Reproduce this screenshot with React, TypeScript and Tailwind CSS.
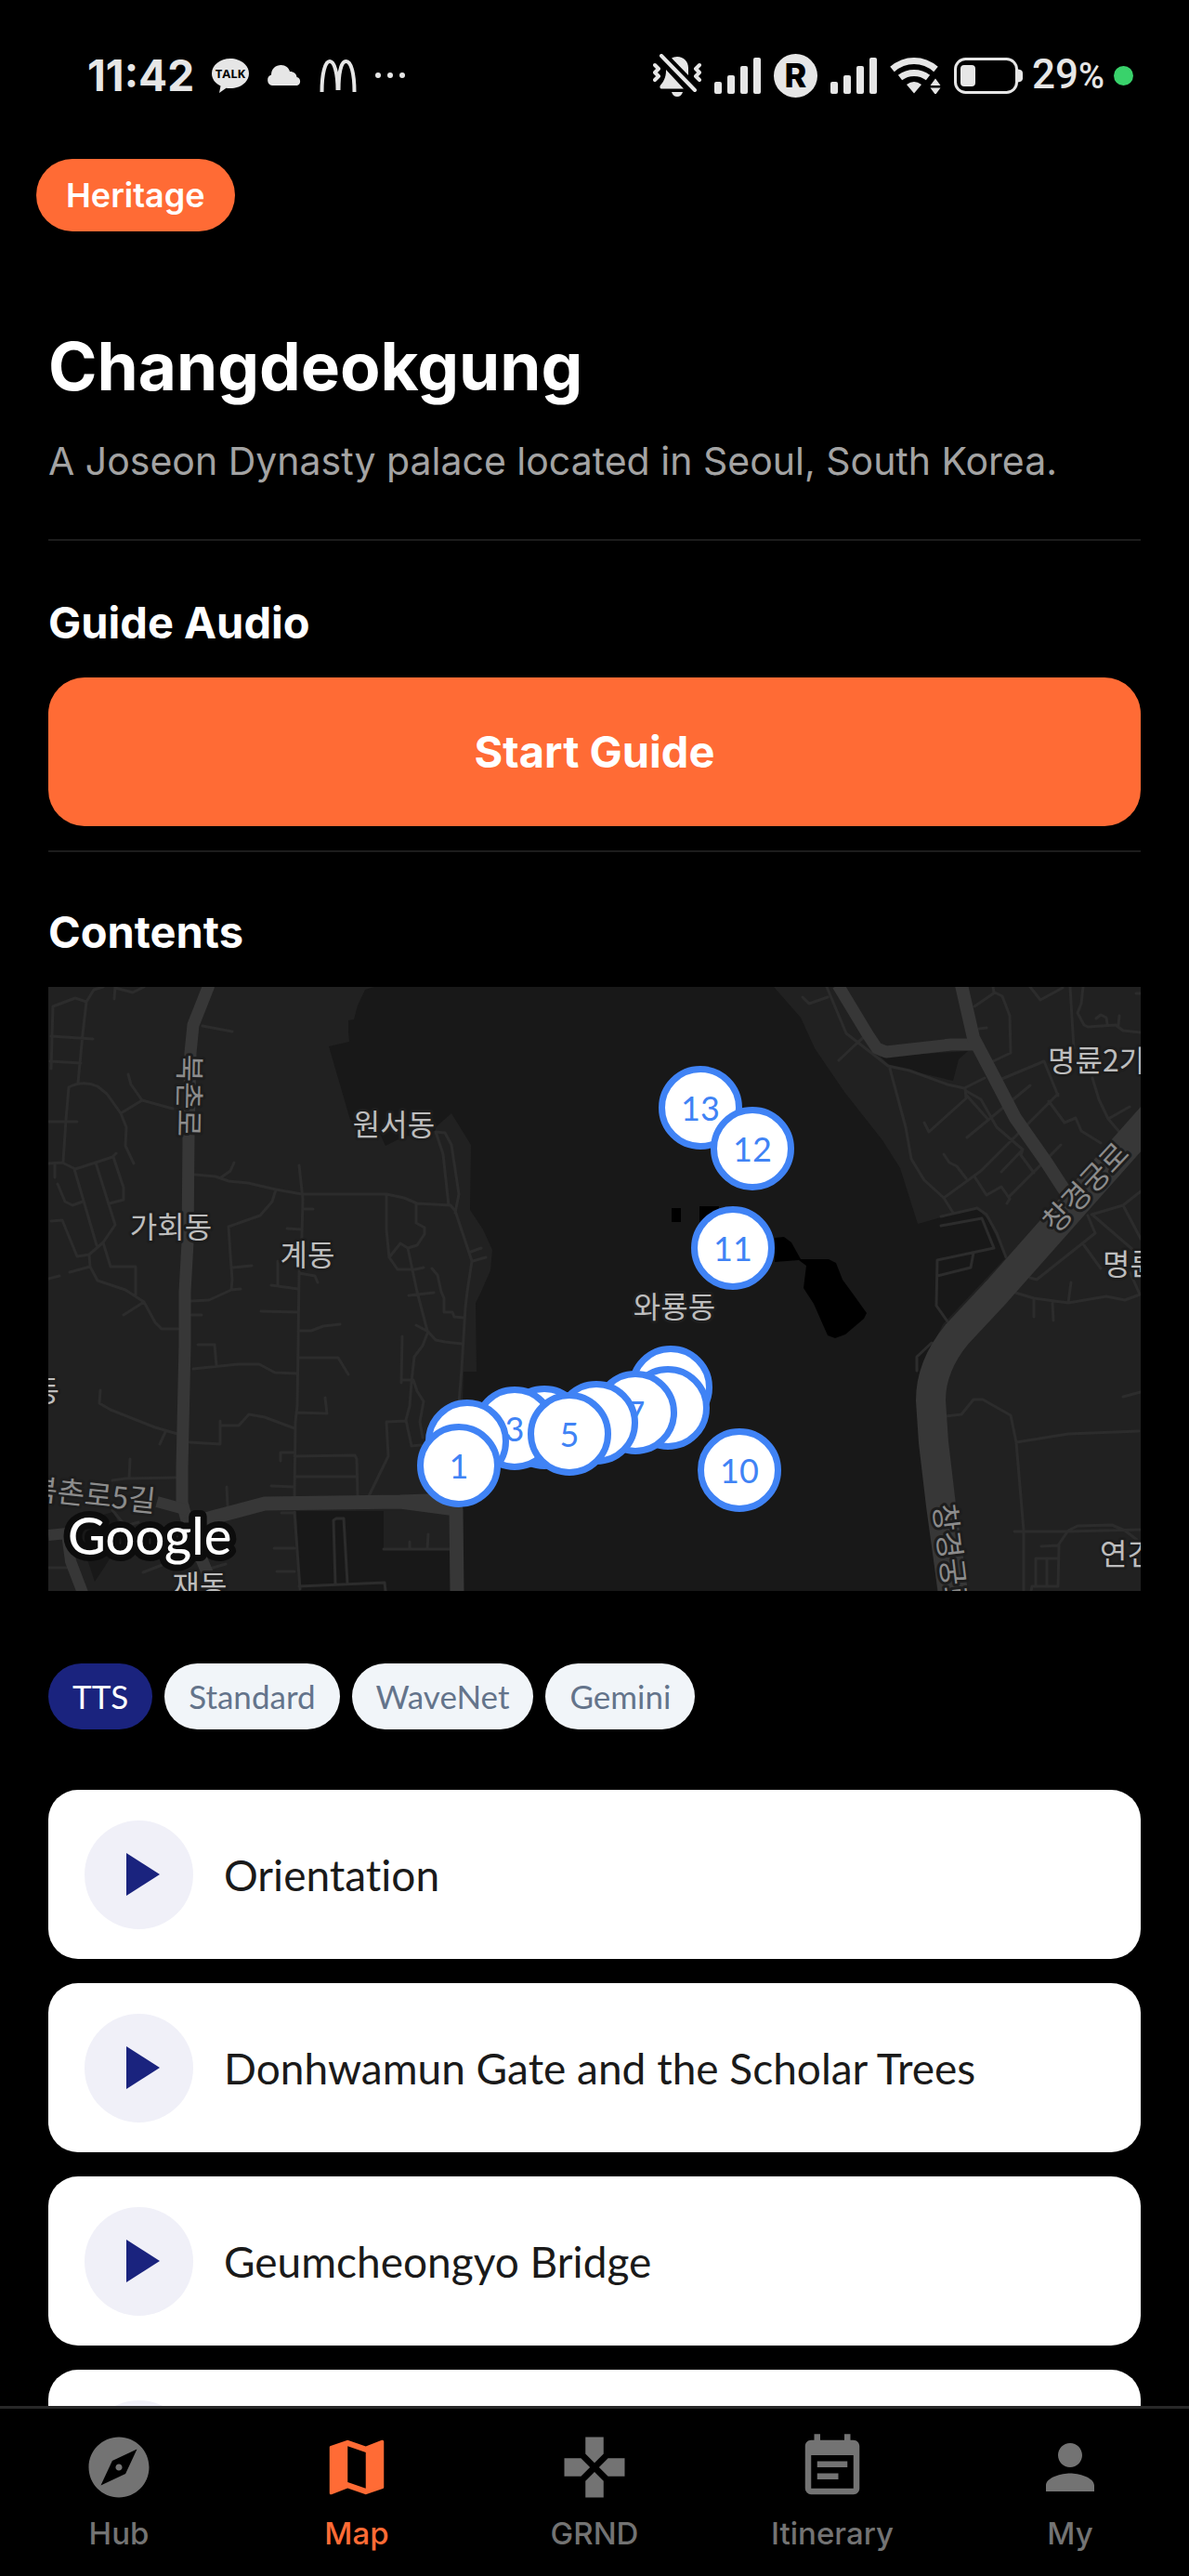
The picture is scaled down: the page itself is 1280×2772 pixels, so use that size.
import { useState } from "react";
import type { IconType } from "react-icons";
import { MdEventNote, MdExplore, MdGamepad, MdMap, MdPerson } from "react-icons/md";

interface Stop {
  id: number;
  x: number;
  y: number;
}

const MAP_W = 1176;
const MAP_H = 650;

// sorted north to south, so that southern pins overlap northern ones
const stops: Stop[] = [
  { id: 13, x: 702, y: 130 },
  { id: 12, x: 758, y: 174 },
  { id: 11, x: 737, y: 281 },
  { id: 9, x: 670, y: 431 },
  { id: 8, x: 667, y: 453 },
  { id: 7, x: 632, y: 458 },
  { id: 6, x: 590, y: 469 },
  { id: 4, x: 534, y: 474 },
  { id: 3, x: 502, y: 475 },
  { id: 5, x: 561, y: 481 },
  { id: 2, x: 451, y: 489 },
  { id: 1, x: 442, y: 515 },
  { id: 10, x: 744, y: 520 },
];

const voices = ["TTS", "Standard", "WaveNet", "Gemini"];

const tracks = ["Orientation", "Donhwamun Gate and the Scholar Trees", "Geumcheongyo Bridge", ""];

const navItems: { label: string; icon: IconType }[] = [
  { label: "Hub", icon: MdExplore },
  { label: "Map", icon: MdMap },
  { label: "GRND", icon: MdGamepad },
  { label: "Itinerary", icon: MdEventNote },
  { label: "My", icon: MdPerson },
];

const alleys = [
  "M3 88 5 21 29 12 41 16 49 3 59 0M72 0 71 13M72 1 91 6 103 0M41 16 37 51 32 103M3 53 48 56M2 80 35 82",
  "M16 188 19 143 22 108Q37 100 53 107L63 115 78 136 84 151 83 171 92 190M78 136 101 122 134 131M101 122 89 105 86 94M0 145H31",
  "M0 190 15 189 29 196 51 189 69 183 73 179M28 196 52 278M51 189 72 256 59 275 44 288 31 290 15 251 3 252",
  "M70 183 81 216V229L66 233M10 212 18 231 26 235 37 231M7 191V205M59 275 67 301H94V333",
  "M44 288 45 301 53 316 83 326 103 339 115 361 122 368H140M103 339 81 353M0 314 12 311M23 307 45 301M166 42 198 48",
  "M158 202 180 204 194 209 215 211 245 218 273 223H364L383 227 397 233 433 235 438 241 456 295 451 328 449 345 445 411 442 448",
  "M186 205 196 198 200 189M270 192 274 228 273 268 270 308 269 385 268 451 266 468 265 548",
  "M245 218 241 231 228 246 194 258 196 288 198 315 197 326M154 338 173 337 197 326 207 325M274 239H285M257 260 273 261",
  "M417 156 427 157 434 170 442 223 438 243M417 156 425 180 431 235M364 223V261L367 291 376 304H395L404 302",
  "M396 233V254L405 259V266L397 278 387 281 379 276 367 291M387 281 397 328 408 370 417 380 427 382 445 384",
  "M413 303 419 310 423 328 426 335V350H435L437 355 447 356M455 285 466 281M457 295 471 291",
  "M198 302 219 300M247 295V322M240 321 269 325M270 308 287 311 290 318M154 353H165M229 349 269 350M269 370H283L296 365 314 363",
  "M161 385H179L181 408M156 411 205 406H227L244 415 267 416M269 399H312L323 417M388 332 415 329M396 364 409 371",
  "M408 373 403 386 394 398 391 425 389 451 385 466 391 494 401 493M381 376 380 426M380 423H393L397 435 404 446 400 468 403 485",
  "M56 434 55 448 67 455 115 474 139 481M126 479 120 492M152 490 185 492V467M186 472H205L216 460 233 463 265 475M267 458 300 459 298 442",
  "M265 505 330 504 332 508 333 548M265 527H332M250 510V501H265M240 537 265 538M385 467 364 468 366 505 345 548",
  "M69 531 83 529 138 528M88 508 87 529M192 538 193 558M265 565 271 648M251 566H265M243 604H265M246 629H265",
  "M309 642 307 574 310 572H318L322 642M270 645 362 641 363 650M361 605H433M389 597V605M409 589 408 605",
  "M102 630 138 616M0 625H20M69 563 83 580 97 576M174 626 191 621",
  "M838 0 859 50 904 85 927 90 968 105 986 109 1008 98M1017 103 1072 80M812 11 819 18 839 11M851 79 870 61 878 54",
  "M906 88 923 151 929 185 943 208 964 227 974 243M943 146 948 156 988 120 987 109",
  "M988 112 1004 121 1021 151 1049 175M988 116 1012 143M989 162 1057 106M1072 80 1087 117M1087 115 1020 182 1004 198 964 227",
  "M1077 123 1094 146 1106 141 1112 155 1133 168M997 21 1019 6 1027 10 1035 31 1036 71 1015 81M1017 0 1018 6M1002 45 1010 44",
  "M1057 0 1068 14 1092 1M1100 0 1104 66M1114 0 1112 18 1108 28 1115 41 1119 43 1149 41 1157 47 1176 49M1153 31 1152 41",
  "M1128 34 1133 30 1139 33 1140 40M1171 7H1176M1124 98 1131 121 1141 142 1164 129M1141 142 1153 156M964 180 970 189 978 193 988 206",
  "M997 204 1010 224 1026 215 1035 228 1032 233M1035 225 1090 170M1026 199 1049 175 1047 181 1061 200",
  "M961 247 1000 238 1010 245 1021 265 1031 291M961 257 1005 249 1018 281 957 294 956 343 968 360M996 286 993 302 957 311",
  "M1119 246 1127 265 1064 315 1057 313M1123 245 1157 235 1176 220M1157 235 1176 271M1125 246 1176 290M1115 278 1133 303",
  "M1101 318 1098 340M1041 329 1061 335 1098 340 1139 333 1159 337 1175 331 1165 308M1061 336V355M1081 340 1082 359M1157 441 1176 436",
  "M966 462 983 460 996 444H1006L1036 461 1042 490 1050 585V650M1042 490 1098 481 1174 478M1040 586H1098L1176 584",
  "M1069 602 1087 601 1098 585 1108 580 1145 579 1159 585 1172 595M1088 601 1087 645H1059L1058 650M1063 645V615H1088M1075 615V645M935 413V398L951 383",
].join("");

function MapCanvas() {
  return (
    <svg viewBox={`0 0 ${MAP_W} ${MAP_H}`} className="block w-full" role="img" aria-label="Map of Changdeokgung">
      <rect width={MAP_W} height={MAP_H} fill="#212121" />
      <g fill="#181818">
        <path d="M351 0 341 3 333 20 329 35 323 36V48L324 59 302 64 325 143 357 158 363 171 383 161 417 155V151L434 136 455 170 454 240 468 261 478 283 476 305 466 328 460 340 461 414H447L446 451V650H957L935 451 937 418 963 363 1031 291 1012 251 1000 238 961 248 936 255 917 195 898 165 857 113 825 66 810 33 781 0Z" />
        <path d="M896 75 990 69 980 78 974 101 906 85Z" />
        <path d="M267 564H361V605H433V650H271Z" />
        <path d="M34 575 70 565 82 590 60 625 50 640 40 610Z" />
      </g>
      <path
        d="M782 270 792 269 800 275 810 293H840L848 297 855 315 866 330 881 351 878 357 858 374 847 378 839 375 824 341 813 324 816 300 808 294 782 296ZM671 238H681V253H671ZM701 236H722V255H701Z"
        fill="#000"
      />
      <path d={alleys} fill="none" stroke="#2c2c2c" strokeWidth="3" strokeLinecap="round" strokeLinejoin="round" />
      <g fill="none" stroke="#373737" strokeLinejoin="round">
        <path strokeWidth="13" d="M173 -2 156 41 153 71 151 161 150 275 147 328V385L144 518V555L152 585 176 642" />
        <path strokeWidth="15" d="M146 580 180 570 233 556 379 554 439 562 440 652M379 554 440 552" />
        <path strokeWidth="12" d="M117 554 150 563M0 590 20 588 40 570M20 588 24 618 37 652" />
        <path strokeWidth="13" d="M850 -2 882 51 892 66 902 70 972 62H998" />
        <path strokeWidth="14" d="M983 -2 996 55 1015 91 1041 141 1074 188 1100 228" />
        <path strokeWidth="32" d="M1200 126 1021 328 978 374Q950 408 950 445L953 490 961 558 974 652" />
      </g>
      <g
        fontFamily='"Noto Sans CJK KR", sans-serif'
        fontSize="32"
        fill="#bdbdbd"
        stroke="#1d1d1d"
        strokeWidth="6"
        strokeLinejoin="round"
        paintOrder="stroke"
        dominantBaseline="central"
      >
        <text x="372" y="146" textAnchor="middle">원서동</text>
        <text x="132" y="256" textAnchor="middle">가회동</text>
        <text x="279" y="286" textAnchor="middle">계동</text>
        <text x="674" y="342" textAnchor="middle">와룡동</text>
        <text x="163" y="642" textAnchor="middle">재동</text>
        <text x="12" y="432" textAnchor="end">동</text>
        <text x="1076" y="77">명륜2가</text>
        <text x="1135" y="296">명륜</text>
        <text x="1132" y="608">연건</text>
        <g fill="#8c8c8c">
          <text transform="translate(154 117) rotate(91)" textAnchor="middle">북촌로</text>
          <text transform="translate(1115 214) rotate(-47)" textAnchor="middle">창경궁로</text>
          <text transform="translate(967 556) rotate(83)">창경궁로</text>
          <text transform="translate(-19 537) rotate(6)">북촌로5길</text>
        </g>
      </g>
      <text
        x="21"
        y="611"
        fontFamily="Lato, sans-serif"
        fontSize="56"
        fontWeight="500"
        fill="#fff"
        stroke="#0c0c0c"
        strokeWidth="14"
        strokeLinejoin="round"
        paintOrder="stroke"
      >
        Google
      </text>
    </svg>
  );
}

function SignalIcon() {
  return (
    <svg viewBox="0 0 50 40" className="h-10 w-[50px]" fill="#e6e6e6" aria-hidden="true">
      <rect x="0" y="27" width="8" height="13" rx="2" />
      <rect x="14" y="20" width="8" height="20" rx="2" />
      <rect x="28" y="10" width="8" height="30" rx="2" />
      <rect x="42" y="1" width="8" height="39" rx="2" />
    </svg>
  );
}

function StatusBar() {
  return (
    <div className="flex h-[162px] shrink-0 items-center justify-between pr-[60px] pl-[94px] text-[#e6e6e6]">
      <div className="flex items-center gap-[19px]">
        <span className="text-[46px] leading-[56px] font-bold">11:42</span>
        <svg viewBox="0 0 40 40" className="size-10" aria-hidden="true">
          <path
            d="M20 2C9 2 0 9 0 18c0 6 3.600 10.500 9.500 13.500L8 39l7.500-5.200q2 .3 4.500.3c11 0 20-7.100 20-16.100S31 2 20 2Z"
            fill="currentColor"
          />
          <text x="20" y="23" textAnchor="middle" fontFamily="'Open Sans', sans-serif" fontSize="13" fontWeight="700" fill="#000">
            TALK
          </text>
        </svg>
        <svg viewBox="0 0 38 24" className="h-6 w-[38px]" fill="currentColor" aria-hidden="true">
          <path d="M6 23a6 6 0 0 1-1-11.500C5 5 10 1 15.500 1c5 0 8.500 3 9.500 7 4.500 0 7 2.500 7.500 6A4.700 4.700 0 0 1 33 23Z" />
        </svg>
        <svg viewBox="0 0 40 36" className="h-9 w-10" fill="none" stroke="currentColor" strokeWidth="4" aria-hidden="true">
          <path d="M2.500 36C2.500 16 6 3 11 3s8.500 13 8.500 31M37.500 36C37.500 16 34 3 28.500 3s-8 13-8 31" />
        </svg>
        <svg viewBox="0 0 34 8" className="h-2 w-[34px]" fill="currentColor" aria-hidden="true">
          <circle cx="4" cy="4" r="3" />
          <circle cx="17" cy="4" r="3" />
          <circle cx="30" cy="4" r="3" />
        </svg>
      </div>
      <div className="flex items-center gap-[14px]">
        <svg viewBox="0 0 52 46" className="h-[46px] w-[52px]" fill="currentColor" aria-hidden="true">
          <path d="M20 4.500q2-1.500 6-1.500c7 0 12 5 12 12v8ZM14 17v1c0 8-3 12-6.500 16.500Q7 37.500 9 37.500h24ZM20 41h12q-1.500 5-6 5t-6-5Z" />
          <path
            d="M9 2 45 39M2 12l4 4-4 4 4 4-4 4M50 12l-4 4 4 4-4 4 4 4"
            fill="none"
            stroke="currentColor"
            strokeWidth="4"
            strokeLinecap="round"
            strokeLinejoin="round"
          />
        </svg>
        <SignalIcon />
        <span className="flex size-[47px] items-center justify-center rounded-full bg-[#e6e6e6] text-[36px] leading-none font-extrabold text-black">
          R
        </span>
        <SignalIcon />
        <svg viewBox="0 0 55 40" className="h-10 w-[55px]" aria-hidden="true">
          <g fill="none" stroke="currentColor" strokeWidth="7">
            <path d="M2.500 13.500Q13 4.500 26 4.500T49.500 13.500" />
            <path d="M11 22.500Q17.500 17.500 26 17.500T41 22.500" />
          </g>
          <path d="M18 30q8-6 16 0L26 39.500ZM43.500 31 49 23.500 54.500 31ZM43.500 33.500H54.500L49 41Z" fill="currentColor" />
        </svg>
        <div className="flex items-center gap-[10px]">
          <svg viewBox="0 0 74 40" className="h-10 w-[74px]" fill="currentColor" aria-hidden="true">
            <rect x="1.500" y="2.500" width="66" height="36" rx="11" fill="none" stroke="currentColor" strokeWidth="3" />
            <rect x="7" y="9" width="16" height="23" rx="4" />
            <path d="M69 13.500q5 .5 5 4v6q0 3.500-5 4Z" />
          </svg>
          <span className="font-['Roboto',sans-serif] text-[44px] leading-[48px] font-medium">
            29<span className="text-[38px]">%</span>
          </span>
          <span className="size-[21px] rounded-full bg-[#39d26b]" />
        </div>
      </div>
    </div>
  );
}

export default function App() {
  const [voice, setVoice] = useState("TTS");
  const [tab, setTab] = useState("Map");

  return (
    <div className="flex h-screen flex-col overflow-hidden bg-black font-['Inter',sans-serif] text-white">
      <StatusBar />

      <main className="min-h-0 flex-1 overflow-y-auto pt-[9px] [scrollbar-width:none]">
        <span className="ml-[39px] inline-flex h-[78px] items-center rounded-full bg-[#ff6b35] px-8 align-top text-[36px] font-semibold">
          Heritage
        </span>

        <div className="px-[52px]">
          <section className="mt-[101px] border-b-2 border-[#1c1c1c] pb-[58px]">
            <h1 className="text-[71px] leading-[88px] font-bold">Changdeokgung</h1>
            <p className="mt-8 text-[41px] leading-[52px] text-[#a3a3a3]">
              A Joseon Dynasty palace located in Seoul, South Korea.
            </p>
          </section>

          <section className="border-b-2 border-[#1c1c1c] pt-[58px] pb-[26px]">
            <h2 className="text-[47px] leading-[60px] font-bold">Guide Audio</h2>
            <button type="button" className="mt-[29px] h-40 w-full rounded-[39px] bg-[#ff6b35] text-[47px] font-bold">
              Start Guide
            </button>
          </section>

          <section className="pt-14">
            <h2 className="text-[47px] leading-[60px] font-bold">Contents</h2>
            <div className="relative mt-[29px] overflow-hidden">
              <MapCanvas />
              {stops.map((s) => (
                <button
                  key={s.id}
                  type="button"
                  className="absolute flex size-[90px] -translate-1/2 items-center justify-center rounded-full border-7 border-[#4083f5] bg-white font-['Lato',sans-serif] text-[36px] text-[#4083f5]"
                  style={{ left: `${(s.x / MAP_W) * 100}%`, top: `${(s.y / MAP_H) * 100}%` }}
                >
                  {s.id}
                </button>
              ))}
            </div>

            <div className="mt-[78px] flex gap-[13px] font-['Lato',sans-serif]">
              {voices.map((v) => (
                <button
                  key={v}
                  type="button"
                  aria-pressed={voice === v}
                  onClick={() => setVoice(v)}
                  className={`h-[71px] rounded-full px-[26px] text-[35px] ${
                    voice === v ? "bg-[#1a237e] text-white" : "bg-[#f1f5f9] text-[#64748b]"
                  }`}
                >
                  {v}
                </button>
              ))}
            </div>

            <ul className="mt-[65px] flex flex-col gap-[26px]">
              {tracks.map((title, i) => (
                <li key={i}>
                  <button
                    type="button"
                    className="flex h-[182px] w-full items-center gap-[33px] rounded-[32px] bg-white px-[39px] text-left font-['Lato',sans-serif] text-[46px] text-[#1a1a1a] [font-variant-ligatures:none]"
                  >
                    <span className="flex size-[117px] shrink-0 items-center justify-center rounded-full bg-[#f0f0f8]">
                      <svg viewBox="0 0 36 46" className="ml-2 h-[46px] w-9" fill="#1a237e" aria-hidden="true">
                        <path d="M0 0 36 23 0 46Z" />
                      </svg>
                    </span>
                    {title}
                  </button>
                </li>
              ))}
            </ul>
          </section>
        </div>
      </main>

      <nav className="grid shrink-0 grid-cols-5 border-t-3 border-[#282828] bg-black pt-6 pb-[26px]">
        {navItems.map(({ label, icon: Icon }) => (
          <button
            key={label}
            type="button"
            onClick={() => setTab(label)}
            className={`flex flex-col items-center gap-3 ${tab === label ? "text-[#ff6b35]" : "text-[#737373]"}`}
          >
            <Icon className="size-[78px]" />
            <span className="text-[33px] leading-10 font-medium">{label}</span>
          </button>
        ))}
      </nav>
    </div>
  );
}
